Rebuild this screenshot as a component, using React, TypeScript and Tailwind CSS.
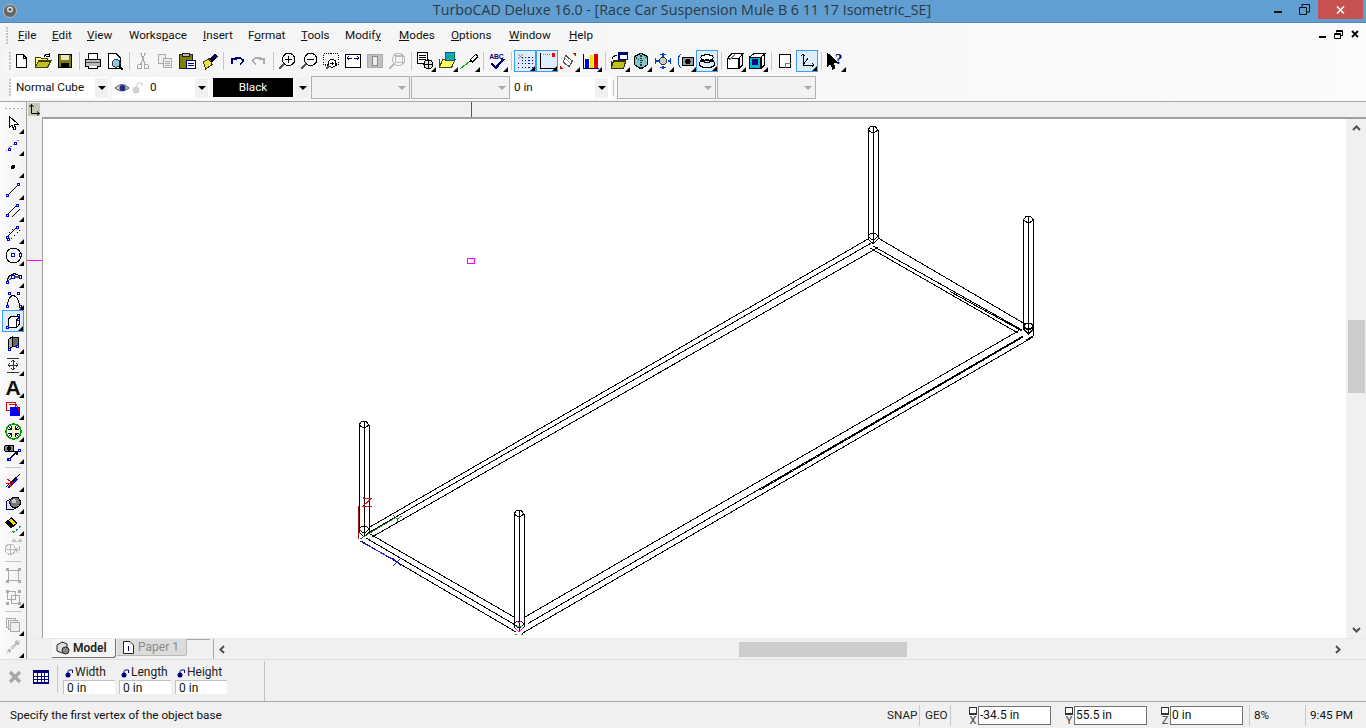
import React from "react";

type IP = { children: React.ReactNode; s?: number };
const I = ({ children, s = 16 }: IP) => (
  <svg width={s} height={s} viewBox="0 0 16 16" fill="none" stroke="#000" strokeWidth="1" shapeRendering="crispEdges">{children}</svg>
);
const Tri = () => (
  <svg width="5" height="5" viewBox="0 0 5 5" className="absolute right-0 bottom-0"><path d="M5 0V5H0Z" fill="#000" /></svg>
);

const Btn = ({ children, fly, on }: { children: React.ReactNode; fly?: boolean; on?: boolean }) => (
  <div className={on ? "relative w-[22px] h-[22px] flex items-center justify-center border border-[#3e9cf2] bg-[#deedfb]" : "relative w-[22px] h-[22px] flex items-center justify-center"}>
    {children}
    {fly && <Tri />}
  </div>
);
const Sep = () => (
  <div className="w-[6px] h-[22px] flex justify-center"><div className="w-px h-[18px] mt-[2px] bg-[#c8c8c8]" /></div>
);
const HSep = () => (
  <div className="h-[6px] w-[22px] flex items-center justify-center"><div className="h-px w-[16px] bg-[#c8c8c8]" /></div>
);

const Mag = ({ children, c = "#000" }: { children?: React.ReactNode; c?: string }) => (
  <I s={18}><circle cx="9.5" cy="6.5" r="5.5" stroke={c} /><path d="M5.5 10.5L1 15" stroke={c === "#000" ? "#555" : c} strokeWidth="2" />{children}</I>
);

const blue = "#0000e0";
const Pt = ({ x, y }: { x: number; y: number }) => <rect x={Math.floor(x) + 0.5} y={Math.floor(y) + 0.5} width="2" height="2" fill="#fff" stroke={blue} />;

const top: (React.ReactNode | null)[] = [
  <Btn key="1"><I><path d="M3.5 1.5H10L13.5 5V14.5H3.5Z" fill="#fff" /><path d="M10 1.5V5H13.5" /></I></Btn>,
  <Btn key="2"><I s={18}><path d="M1 14V5H6L7 6H12V8" fill="#ffff80" stroke="#404000" /><path d="M1 14L4 8H15L12 14Z" fill="#c0c020" stroke="#404000" /><path d="M9 4Q11 1 14 3M14 1V4H11" stroke="#000" /></I></Btn>,
  <Btn key="3"><I><rect x="1.5" y="1.5" width="13" height="13" fill="#808000" /><rect x="4" y="2" width="8" height="5" fill="#e8e8c0" stroke="none" /><rect x="4" y="10" width="8" height="4" fill="#000" stroke="none" /></I></Btn>,
  null,
  <Btn key="4"><I s={18}><path d="M4 6V1.5H12V6" fill="#fff" /><path d="M1.5 6.5H14.5V12.5H1.5Z" fill="#bbb" /><path d="M4 12V15H12V12" fill="#fff" /><path d="M2 9H14" stroke="#555" /></I></Btn>,
  <Btn key="5"><I s={18}><path d="M2.5 1.5H9L12.5 5V14.5H2.5Z" fill="#fff" /><circle cx="9" cy="10" r="3.5" fill="#8fc8e8" stroke="#333" /><path d="M11.5 12.5L15 15.5" strokeWidth="2" /></I></Btn>,
  null,
  <Btn key="6"><I s={18}><circle cx="5" cy="13" r="2" stroke="#aaa" /><circle cx="11" cy="13" r="2" stroke="#aaa" /><path d="M6 11L10 1M10 11L6 1" stroke="#aaa" /></I></Btn>,
  <Btn key="7"><I><path d="M1.5 1.5H8V10H1.5Z" fill="#eee" stroke="#aaa" /><path d="M6.5 5.5H14.5V14.5H6.5Z" fill="#eee" stroke="#aaa" /><path d="M8 8H13M8 10H13M8 12H13" stroke="#aaa" /></I></Btn>,
  <Btn key="8"><I s={18}><rect x="1.5" y="2.5" width="11" height="12" fill="#808000" stroke="#222" /><rect x="4" y="1" width="6" height="3" fill="#bbb" stroke="#222" /><rect x="7.5" y="7.5" width="8" height="7" fill="#fff" stroke="#000080" /><path d="M9 10H14M9 12H14" stroke="#000080" /></I></Btn>,
  <Btn key="9"><I s={18}><path d="M8 8L13 2L15 4L9 10" fill="#000080" stroke="#000" /><path d="M3 9L8 6L11 11L5 15Z" fill="#f0e040" stroke="#333" /><path d="M1 16H6" stroke="#f0e040" strokeDasharray="1 1" /></I></Btn>,
  null,
  <Btn key="10"><I><path d="M3 11V6H8" stroke="#000080" strokeWidth="1.5" /><path d="M4 6Q10 3 14 7Q14 10 11 11" stroke="#000080" strokeWidth="1.5" /></I></Btn>,
  <Btn key="11"><I><path d="M13 11V6H8" stroke="#aaa" strokeWidth="1.5" /><path d="M12 6Q6 3 2 7Q2 10 5 11" stroke="#aaa" strokeWidth="1.5" /></I></Btn>,
  null,
  <Btn key="12"><Mag><path d="M6.5 6.5H12.5M9.5 3.5V9.5" /></Mag></Btn>,
  <Btn key="13"><Mag><path d="M6.5 6.5H12.5" /></Mag></Btn>,
  <Btn key="14"><I s={18}><rect x="1.5" y="1.5" width="13" height="10" strokeDasharray="1 1" /><circle cx="9" cy="10" r="3.5" fill="#fff" /><path d="M6.5 12.5L4 15" strokeWidth="2" stroke="#555" /><path d="M7.5 10H10.5M9 8.5V11.5" /></I></Btn>,
  <Btn key="15"><I><rect x="0.5" y="1.5" width="15" height="13" rx="1" fill="#fff" /><path d="M2 5H7M14 5H9" stroke="#000080" /><path d="M4 3L2 5L4 7M12 3L14 5L12 7" stroke="#000080" /></I></Btn>,
  <Btn key="16"><I><rect x="0.5" y="1.5" width="15" height="13" fill="#c0c0c0" stroke="#aaa" /><rect x="5.5" y="3.5" width="5" height="9" fill="#eee" stroke="#888" /></I></Btn>,
  <Btn key="17"><I s={18}><circle cx="9.5" cy="6.5" r="5.5" stroke="#bbb" /><rect x="6.5" y="3.5" width="6" height="6" stroke="#bbb" /><path d="M5.5 10.5L1 15" stroke="#bbb" strokeWidth="2" /></I></Btn>,
  null,
  <Btn key="18" fly><I s={18}><rect x="1.5" y="0.5" width="9" height="10" fill="#fff" /><path d="M3 3H9M3 5H9M3 7H9" /><circle cx="11" cy="11" r="4" fill="#ddd" /><path d="M7 11H15M11 7V15" /></I></Btn>,
  <Btn key="19" fly><I s={18}><path d="M1 14L4 7H15L12 14Z" fill="#ffff60" stroke="#404000" /><path d="M1 14V6" stroke="#404000" /><rect x="7" y="0.5" width="8" height="7" fill="#20a0e0" stroke="#006060" /><path d="M8 6L11 3L14 6" stroke="#00c000" /></I></Btn>,
  <Btn key="20" fly><I s={18}><path d="M0 15L9 8" stroke="#00b000" /><path d="M9 7L14 2L16 4L11 9Z" fill="#fff" /><path d="M8 8L10 9" /></I></Btn>,
  null,
  <Btn key="21" fly><I s={18}><text x="1" y="6" fontSize="6" fontWeight="700" fontFamily="Liberation Sans" fill="#000080" stroke="none">ABC</text><path d="M3 10L7 14L14 6" stroke="#000080" strokeWidth="2.2" /></I></Btn>,
  null,
  <Btn key="22" fly on><I s={18}><g stroke="#0000c0" strokeDasharray="1 2"><path d="M5 7.5H15M2 10.5H15M2 13.5H15M5 4.5H15" /></g><path d="M2 2L6 6M6 2L2 6" stroke="#888" /></I></Btn>,
  <Btn key="23" fly on><I s={18}><path d="M2.5 1V14.5H15" /><path d="M4 2.5H12" stroke="#888" strokeDasharray="1 1" /><rect x="12" y="1" width="3" height="3" fill="#f00" stroke="none" /></I></Btn>,
  <Btn key="24" fly><I s={18}><path d="M5 3L11 8L8 13L3 9Z" fill="#fff" stroke="#555" /><path d="M4 5L9 10" stroke="#999" /><path d="M12 1L14 3M14 1L12 3M0 13L2 15M2 13L0 15" stroke="#e00000" /></I></Btn>,
  <Btn key="25" fly><I s={18}><path d="M1.5 15V1.5M1 14.5H15" stroke="#000060" /><rect x="3" y="6" width="3" height="8" fill="#0000e0" stroke="none" /><rect x="7" y="3" width="3" height="11" fill="#f0e000" stroke="none" /><rect x="11" y="2" width="3" height="12" fill="#e00000" stroke="none" /></I></Btn>,
  null,
  <Btn key="26" fly><I s={18}><path d="M1 15L3 8H14L12 15Z" fill="#c0c020" stroke="#303000" /><path d="M1 15V8" stroke="#303000" /><rect x="8" y="0.5" width="7.5" height="6" fill="#fff" stroke="#000080" /><rect x="8" y="0.5" width="7.5" height="2" fill="#000080" stroke="none" /><path d="M2 6Q3 3 6 3" /></I></Btn>,
  <Btn key="27" fly><I s={18}><path d="M8 1L14 4V11L8 15L2 11V4Z" fill="#80c8c8" /><path d="M8 1V15M2 4L8 8L14 4" stroke="#333" strokeDasharray="1 1" /></I></Btn>,
  <Btn key="28" fly><I s={18}><ellipse cx="8" cy="8" rx="3.5" ry="3" fill="#ccc" stroke="#333" /><path d="M8 1V4M8 12V15M1 8H4M12 8H15M5 2H11M5 14H11M1 5V11M15 5V11" stroke="#0040e0" /></I></Btn>,
  <Btn key="29" fly><I s={18}><path d="M4 2Q0 8 4 14" stroke="#0040e0" /><path d="M4 2L2 5" stroke="#0040e0" /><rect x="5.5" y="5" width="10" height="7" rx="1" fill="#999" /><circle cx="10.5" cy="8.5" r="2" fill="#000" /></I></Btn>,
  <Btn key="30" on fly><I s={18}><ellipse cx="8" cy="5" rx="5.5" ry="2.5" fill="#fff" /><path d="M2 7.5Q8 11 14 7.5" /><ellipse cx="8" cy="10.5" rx="7" ry="3.5" /></I></Btn>,
  null,
  <Btn key="31" fly><I s={18}><path d="M1.5 5.5H11.5V15H1.5Z" fill="#fff" /><path d="M1.5 5.5L5 1.5H15L11.5 5.5" fill="#fff" /><path d="M11.5 15L15 11V1.5" /><path d="M3 7L8 2" stroke="#888" /></I></Btn>,
  <Btn key="32" fly><I s={18}><path d="M1.5 4.5H11.5V15H1.5Z" fill="#00c0d0" /><rect x="3.5" y="6.5" width="5" height="5" fill="#000080" stroke="none" /><path d="M1.5 4.5L5 1.5H15L11.5 4.5" fill="#fff" /><path d="M11.5 15L15 11V1.5" /></I></Btn>,
  null,
  <Btn key="33"><I><path d="M2.5 1.5H13.5V14.5H2.5Z" fill="#fff" /><path d="M8.5 14.5V10H13.5" stroke="#777" /></I></Btn>,
  <Btn key="34" on fly><I><path d="M4 1V12H15" /><path d="M4 1L2 3M4 1L6 3M15 12L13 10M15 12L13 14M4 12L9 5" /></I></Btn>,
  null,
  <Btn key="35" fly><I s={18}><path d="M1 1V13L4 10L6 15L8 14L6 9H10Z" fill="#000" /><text x="8" y="11" fontSize="13" fontWeight="700" fontFamily="Liberation Serif" fill="#000060" stroke="none">?</text></I></Btn>,
];

const left: (React.ReactNode | null)[] = [
  <I key="a"><path d="M4 1V13L7 10L9 15L11 14L9 9H13Z" fill="#fff" /></I>,
  <I key="b"><path d="M1 14L15 2" stroke="#888" strokeDasharray="2 1" /><Pt x={3} y={11} /><Pt x={9} y={5} /></I>,
  <I key="c"><circle cx="8" cy="8" r="1.5" fill="#000" /></I>,
  <I key="d"><path d="M3 14L13 4" /><Pt x={1} y={13} /><Pt x={12} y={2} /></I>,
  <I key="e"><path d="M3 11L11 3M7 14L15 6" /><Pt x={1} y={11} /><Pt x={11} y={1} /></I>,
  <I key="f"><path d="M3 11L11 3" /><path d="M6 14L15 5" strokeDasharray="2 2" /><path d="M4 8L8 4" strokeDasharray="2 2" /><Pt x={1} y={11} /><Pt x={11} y={1} /><Pt x={2} y={13} /></I>,
  <I key="g" s={17}><circle cx="8" cy="8" r="7" /><Pt x={6.5} y={6.5} /><Pt x={13} y={6.5} /></I>,
  <I key="h" s={17}><path d="M2.5 11A6.5 6.5 0 0 1 14 7" /><path d="M3 11L7.5 7.5H14" stroke="#555" /><Pt x={1} y={11} /><Pt x={6} y={6} /><Pt x={13} y={6} /></I>,
  <I key="i" s={17}><path d="M2 14C4 1 11 1 14 14" /><Pt x={1} y={13} /><Pt x={3} y={1} /><Pt x={11} y={1} /><Pt x={13} y={13} /></I>,
  <I key="j"><path d="M3 6.5H11.5V14.5H3Z" fill="#fff" /><path d="M3 6.5L6.5 3H14.5L11.5 6.5M14.5 3V11L11.5 14.5" fill="#fff" /><Pt x={1} y={13} /><Pt x={12} y={1} /><Pt x={12} y={5} /></I>,
  <I key="k"><path d="M3 5L7 2V12L3 15Z" fill="#aaa" /><path d="M7 2H13V11L7 12Z" fill="#666" /><Pt x={3} y={13} /><Pt x={11} y={10} /></I>,
  <I key="l"><path d="M2 1H14M2 15H14M8 3V13M3 8H13M8 3L6 5M8 3L10 5M8 13L6 11M8 13L10 11M3 8L5 6M3 8L5 10M13 8L11 6M13 8L11 10" stroke="#333" /></I>,
  <span key="m" className="font-['Liberation_Sans',sans-serif] text-[21px] font-bold leading-none text-[#111]">A</span>,
  <I key="n"><rect x="1" y="1" width="9" height="8" fill="#fff" stroke="#e00000" /><rect x="5" y="6" width="10" height="9" fill="#0000f0" stroke="none" /><path d="M4 3H9Q14 4 13 10" stroke="#e00000" /></I>,
  <I key="o" s={17}><circle cx="8" cy="8" r="7" fill="#f8f8c0" stroke="#00a000" strokeWidth="1.5" /><path d="M3 3L6 6M13 3L10 6M3 13L6 10M13 13L10 10M6 3V6H3M10 3V6H13M6 13V10H3M10 13V10H13" stroke="#000060" /></I>,
  <I key="p" s={18}><rect x="0.5" y="1.5" width="8" height="5" rx="1" fill="#888" /><circle cx="4.5" cy="4" r="1.5" fill="#000" /><path d="M5 13L11 7" /><path d="M9 7H11.5V9.5" /><Pt x={3} y={12} /><Pt x={12} y={4} /></I>,
  null,
  <I key="q"><path d="M1 14L15 1" /><path d="M3 15L12 6" stroke="#0000f0" strokeWidth="1.5" /><path d="M2 6L9 11M6 14L5 10H1" stroke="#e00000" /></I>,
  <I key="r" s={17}><path d="M1 6L9 2H13V11L7 14H1Z" fill="#e8e8e8" stroke="#000060" /><circle cx="9.5" cy="7" r="5" fill="#777" /><circle cx="8.5" cy="6" r="2" fill="#ccc" stroke="none" /></I>,
  <I key="s" s={17}><path d="M1 5L6 1L11 6L6 10Z" fill="#f0e000" /><path d="M1 5L3 3L8 8L6 10Z" fill="#000" /><path d="M10 12H12M11 11V13" stroke="#0080a0" /><path d="M13 9H15M14 8V10" stroke="#0080a0" /><path d="M7 14H9M8 13V15" stroke="#00a000" /></I>,
  <I key="t" s={18}><circle cx="5.5" cy="10" r="4.5" stroke="#bbb" /><path d="M1 10H10M5.5 5.5V14.5" stroke="#bbb" /><path d="M7 3Q9 0 11 3H7M12 3Q14 0 16 3H12" stroke="#bbb" fill="#ddd" /><path d="M14 7V11H11M12 9L10 11L12 13" stroke="#bbb" /></I>,
  null,
  <I key="u" s={17}><rect x="3.5" y="3.5" width="9" height="9" stroke="#aaa" /><g fill="#aaa" stroke="none"><rect x="1" y="1" width="3" height="3" /><rect x="12" y="1" width="3" height="3" /><rect x="1" y="12" width="3" height="3" /><rect x="12" y="12" width="3" height="3" /></g></I>,
  <I key="v" s={17}><rect x="2.5" y="2.5" width="7" height="7" stroke="#aaa" /><rect x="6.5" y="6.5" width="7" height="7" stroke="#aaa" /><g fill="#aaa" stroke="none"><rect x="1" y="1" width="3" height="3" /><rect x="12" y="1" width="3" height="3" /><rect x="1" y="12" width="3" height="3" /><rect x="12" y="12" width="3" height="3" /></g></I>,
  null,
  <I key="w"><rect x="1.5" y="1.5" width="9" height="9" stroke="#aaa" /><rect x="3.5" y="3.5" width="9" height="9" stroke="#aaa" fill="#eee" /><rect x="5.5" y="5.5" width="9" height="9" stroke="#aaa" fill="#eee" /></I>,
  <I key="x"><path d="M1 15L15 1" stroke="#bbb" /><path d="M11 1L15 5L9 7ZM1 11L5 15L7 9Z" fill="#bbb" stroke="none" /><circle cx="8" cy="8" r="2" fill="#ccc" stroke="none" /></I>,
];
const leftFly = new Set(["a","b","c","d","e","f","g","h","i","j","k","l","m","n","o","p","q","r","s","v","w","x"]);

const menu: [string, string, string, string][] = [
  ["", "F", "ile", "w-[34px]"],
  ["", "E", "dit", "w-[35px]"],
  ["", "V", "iew", "w-[42px]"],
  ["Works", "p", "ace", "w-[74px]"],
  ["", "I", "nsert", "w-[45px]"],
  ["F", "o", "rmat", "w-[53px]"],
  ["", "T", "ools", "w-[44px]"],
  ["Modif", "y", "", "w-[54px]"],
  ["", "M", "odes", "w-[52px]"],
  ["", "O", "ptions", "w-[58px]"],
  ["", "W", "indow", "w-[60px]"],
  ["", "H", "elp", "w-[40px]"],
];

const Drop = ({ off }: { off?: boolean }) => (
  <div className={off ? "w-[13px] h-[20px] flex items-center justify-center" : "w-[13px] h-[20px] flex items-center justify-center bg-[#f0f0f0]"}>
    <svg width="8" height="4" viewBox="0 0 8 4"><path d="M0 0H8L4 4Z" fill={off ? "#a8a8a8" : "#000"} /></svg>
  </div>
);
const Off = () => (
  <div className="w-[99px] mr-[1px] h-[23px] border border-[#b0b0b0] flex items-center justify-end pr-[1px] bg-[#f2f2f2]"><Drop off /></div>
);
const Grip = () => (
  <div className="w-[3px] h-[18px] ml-[6px] flex flex-col justify-between">
    {[0,1,2,3,4,5].map((i) => <div key={i} className="w-[2px] h-[2px] bg-[#c4c4c4]" />)}
  </div>
);
const Lk = () => (
  <svg width="9" height="9" viewBox="0 0 9 9" className="shrink-0 mt-[3px]"><circle cx="3" cy="6" r="2.5" fill="#000080" /><path d="M3 4V2.5Q3 1 5 1H7.5V4" stroke="#000080" fill="none" /></svg>
);
const Prop = ({ label }: { label: string }) => (
  <div className="w-[52px] mr-[4px] -mt-[3px]">
    <div className="flex items-center h-[16px] leading-none text-[#222] pl-[2px] gap-[1px] text-[12px]"><Lk />{label}</div>
    <div className="h-[14px] bg-white border-t border-l border-[#c0c0c0] leading-[14px] pl-[3px] text-[12px]">0 in</div>
  </div>
);
const Coord = ({ a, v, cls }: { a: string; v: string; cls: string }) => (
  <div className={`flex items-end ${cls}`}>
    <div className="w-[10px] flex flex-col items-center text-[11px] leading-[9px] text-[#444]">
      <div className="w-[8px] h-[8px] border border-[#333] border-b-2 bg-white mb-[1px]" />
      {a}
    </div>
    <div className="w-[73px] h-[19px] bg-white border border-[#707070] leading-[17px] pl-[1px] text-[12px]">{v}</div>
  </div>
);

const drawing = (
  <svg width="1303" height="519" viewBox="43 118 1303 519" fill="none" stroke="#000" strokeWidth="1" className="block" shapeRendering="crispEdges">
    <rect x="467.5" y="257.5" width="7" height="5" stroke="#ff00ff" />
    {[[364, 420, 536], [519, 509, 631], [873, 125, 243], [1028.5, 215, 333]].map(([x, t, b]) => (
      <g key={x}>
        <path d={`M${x - 5} ${t + 4}V${b - 5}L${x} ${b}L${x + 5} ${b - 5}V${t + 4}M${x} ${t + 6}V${b}`} />
        <path d={`M${x - 5} ${t + 4}L${x - 2} ${t}H${x + 2}L${x + 5} ${t + 4}L${x + 2} ${t + 6}H${x - 2}ZM${x} ${t}V${t + 6}`} />
        <path d={`M${x - 5} ${b - 8}L${x - 2} ${b - 11}H${x + 2}L${x + 5} ${b - 8}L${x + 2} ${b - 5}H${x - 2}Z`} />
      </g>
    ))}
    <path d="M369 526.5L868 238M368 532L873 241M372 536L878 246.5" />
    <path d="M370 533L514 616M366 537L517 625M361 540L516 631" />
    <path d="M525 616L1019 329.5M528 622.5L1023 335M522 632.5L1033 336" />
    <path d="M760 489L1023 336" />
    <path d="M878 237L1025 323M873 245L1022 329M870 247L1018 332" />
    <path d="M950 290.5L1022 330" />
    <path d="M1023 327H1033V335L1026 339" />
    <path d="M358.5 505V538" stroke="#a01010" />
    <path d="M363 497H372L363 505H372M363 497V496M363 505.5H372" stroke="#c02020" />
    <path d="M360 538L395 517M393 514L397 518L402 515M397 518L397 521" stroke="#208020" />
    <path d="M360 540L396 560M393 565L401 557M393 557L401 565" stroke="#2020c0" />
    <path d="M517 620L519 622L521 620M515 627L519 631L523 627" stroke="#ff00ff" />
    <path d="M516 625H522M515 633H517M521 633H523" stroke="#20a020" />
  </svg>
);

export default function App() {
  return (
    <div className="w-[1366px] h-[728px] overflow-hidden flex flex-col bg-[#f0f0f0] text-[#111] font-['Roboto',sans-serif] text-[11.7px]">
      {/* Title bar */}
      <div className="h-[23px] shrink-0 bg-[#619ed1] border-b border-[#4f88b8] relative flex items-center justify-center">
        <svg width="16" height="16" viewBox="0 0 16 16" className="absolute left-[2px] top-[3px]"><circle cx="8" cy="8" r="6.5" fill="#666" stroke="#bbb" /><circle cx="8" cy="6.5" r="3" fill="#ddd" /><circle cx="8" cy="6.5" r="1.5" fill="#555" /></svg>
        <span className="text-[14.25px] leading-none text-[#2b3a46] font-['Open_Sans',sans-serif] mb-[1px] mr-[2px]">TurboCAD Deluxe 16.0 - [Race Car Suspension Mule B 6 11 17 Isometric_SE]</span>
        <div className="absolute left-[1274px] top-[11px] w-[8px] h-[2px] bg-[#111]" />
        <svg width="11" height="11" viewBox="0 0 11 11" className="absolute left-[1299px] top-[4px]"><path d="M0.5 3.5H7.5V10.5H0.5ZM3 3V0.5H10.5V8H8" fill="none" stroke="#111" /></svg>
        <div className="absolute left-[1318px] top-0 w-[45px] h-[19px] bg-[#c75050] flex items-center justify-center">
          <svg width="9" height="8" viewBox="0 0 9 8"><path d="M1 0.5L8 7.5M8 0.5L1 7.5" stroke="#fff" strokeWidth="1.6" /></svg>
        </div>
      </div>
      {/* Chrome */}
      <div className="bg-gradient-to-r from-[#f4f4f4] to-[#fbfbfb] shrink-0">
        <div className="h-[25px] flex items-center relative">
          <Grip />
          <div className="flex ml-[9px]">
            {menu.map(([a, b, c, w]) => (
              <div key={a + b + c} className={`${w} whitespace-nowrap`}>{a}<span className="underline">{b}</span>{c}</div>
            ))}
          </div>
          <div className="absolute left-[1319px] top-[13px] w-[7px] h-[2px] bg-black" />
          <svg width="9" height="9" viewBox="0 0 9 9" className="absolute left-[1334px] top-[7px]"><path d="M0.5 3.5H6.5V8.5H0.5ZM0.5 4.5H6.5M2.5 2.5V0.5H8.5V5.5H7M2.5 1.5H8.5" fill="none" stroke="#000" /></svg>
          <svg width="8" height="8" viewBox="0 0 8 8" className="absolute left-[1351px] top-[7px]"><path d="M1 1L7 7M7 1L1 7" stroke="#000" strokeWidth="1.8" /></svg>
        </div>
        <div className="h-[26px] flex items-center">
          <div className="h-[24px] flex items-center bg-[#f6f6f6] w-[845px] ml-[3px]">
            <Grip />
            <div className="flex items-center -ml-[2px]">
              {top.map((n, i) => (n === null ? <Sep key={i} /> : n))}
            </div>
          </div>
        </div>
        <div className="h-[27px] flex items-center pl-[3px]">
          <Grip />
          <div className="w-[98px] h-[22px] ml-[-1px] bg-white flex items-center justify-between pr-[1px] pl-[5px]">Normal Cube<Drop /></div>
          <div className="w-[97px] h-[22px] ml-[3px] bg-white flex items-center pr-[1px] pl-[3px]">
            <svg width="14" height="10" viewBox="0 0 14 10" className="shrink-0"><path d="M0 5Q7 -2 14 5Q7 11 0 5Z" fill="#ccc" stroke="#555" /><circle cx="7.5" cy="5" r="3" fill="#203080" /></svg>
            <svg width="11" height="12" viewBox="0 0 11 12" className="shrink-0 ml-[3px]"><circle cx="4" cy="8" r="3.5" fill="#d0d0d0" /><path d="M5 5V2Q5 1 7 1H10V4" stroke="#ccc" fill="none" /></svg>
            <span className="ml-[7px] flex-1">0</span>
            <Drop />
          </div>
          <div className="w-[80px] h-[19px] ml-[4px] bg-black text-white text-center leading-[19px]">Black</div>
          <div className="ml-[3px]"><Drop /></div>
          <div className="ml-[2px]"><Off /></div>
          <Off />
          <div className="w-[100px] h-[22px] bg-white flex items-center justify-between pl-[3px] pr-[3px]">0 in<Drop /></div>
          <div className="w-px h-[16px] bg-[#c8c8c8] ml-[2px] mr-[3px]" />
          <Off />
          <Off />
        </div>
      </div>
      {/* Middle */}
      <div className="flex-1 min-h-0 flex border-t border-[#a8a8a8]">
        <div className="w-[27px] shrink-0 border-r border-[#a0a0a0] flex flex-col pl-[2px] bg-gradient-to-r from-[#fbfbfb] to-[#f2f2f2]">
          <div className="h-[10px] flex items-start pt-[6px] gap-[2px] pl-[3px]">
            {[0,1,2,3,4].map((i) => <div key={i} className="w-[2px] h-[1px] bg-[#b0b0b0]" />)}
          </div>
          {left.map((n, i) => {
            if (n === null) return <HSep key={i} />;
            const key = (n as React.ReactElement).key as string;
            return <Btn key={i} fly={leftFly.has(key)} on={key === "j"}>{n}</Btn>;
          })}
        </div>
        <div className="flex-1 min-w-0 flex flex-col">
          <div className="h-[15px] shrink-0 relative bg-[#f0f0f0]">
            <div className="absolute left-[1px] top-[1px] w-[12px] h-[13px] bg-[#c8c8b8] flex items-center justify-center">
              <svg width="11" height="12" viewBox="0 0 11 12"><path d="M2.5 0.5V9.5H10.5M2.5 0.5L0.5 3M2.5 0.5L4.5 3M10.5 9.5L8 7.5M10.5 9.5L8 11.5" fill="none" stroke="#000" /></svg>
            </div>
            <div className="absolute left-[444px] top-0 w-px h-[15px] bg-[#d000d0]" />
          </div>
          <div className="flex-1 min-h-0 flex">
            <div className="w-[15px] shrink-0 relative">
              <div className="absolute left-0 top-[143px] w-[15px] h-px bg-[#ff00ff]" />
            </div>
            <div className="flex-1 min-w-0 border-l border-t-2 border-[#a0a0a0] bg-white flex">
              <div className="flex-1 min-w-0 overflow-hidden">{drawing}</div>
            </div>
            <div className="w-[20px] shrink-0 bg-[#f0f0f0] flex flex-col items-center border-t-2 border-[#a0a0a0]">
              <div className="h-[17px] w-[17px] flex items-center justify-center bg-[#f0f0f0]">
                <svg width="9" height="6" viewBox="0 0 9 6"><path d="M1 5L4.5 1.5L8 5" fill="none" stroke="#505050" strokeWidth="2" /></svg>
              </div>
              <div className="h-[184px]" />
              <div className="w-[17px] h-[73px] bg-[#cdcdcd]" />
              <div className="flex-1" />
              <div className="h-[17px] w-[17px] flex items-center justify-center">
                <svg width="9" height="6" viewBox="0 0 9 6"><path d="M1 1L4.5 4.5L8 1" fill="none" stroke="#505050" strokeWidth="2" /></svg>
              </div>
            </div>
          </div>
          {/* tabs + h scroll */}
          <div className="h-[21px] shrink-0 flex border-t border-[#e8e8e8] bg-[#f0f0f0]">
            <div className="w-[186px] shrink-0 flex pl-[25px] items-start">
              <div className="h-[19px] w-[64px] bg-[#f6f6f6] border-b border-r border-[#707070] rounded-br-[3px] flex items-center pl-[4px] gap-[3px] font-semibold text-[12px] text-[#222]">
                <svg width="14" height="14" viewBox="0 0 14 14" className="shrink-0"><path d="M1 4L6 1L11 3L11 9L6 12L1 10Z" fill="#ddd" stroke="#222" /><circle cx="9.5" cy="9.5" r="3.5" fill="#888" stroke="#222" /></svg>
                Model
              </div>
              <div className="h-[17px] w-[70px] ml-px bg-[#dcdcdc] border-r border-b border-[#b8b8b8] rounded-br-[3px] flex items-center pl-[6px] gap-[4px] text-[12px] text-[#8c8c8c]">
                <svg width="11" height="13" viewBox="0 0 11 13" className="shrink-0"><path d="M0.5 0.5H7L10.5 4V12.5H0.5Z" fill="#fff" stroke="#222" /><path d="M5.5 5V10" stroke="#000080" /></svg>
                Paper 1
              </div>
              <div className="w-[23px] h-px bg-[#a8a8a8]" />
            </div>
            <div className="flex-1 min-w-0 flex items-center border-l border-[#a8a8a8] pl-[5px] relative">
              <svg width="6" height="9" viewBox="0 0 6 9"><path d="M5 1L1.5 4.5L5 8" fill="none" stroke="#505050" strokeWidth="2" /></svg>
              <div className="ml-[514px] w-[168px] h-[15px] bg-[#cdcdcd]" />
              <svg width="6" height="9" viewBox="0 0 6 9" className="ml-[428px]"><path d="M1 1L4.5 4.5L1 8" fill="none" stroke="#505050" strokeWidth="2" /></svg>
            </div>
          </div>
        </div>
      </div>
      {/* Properties */}
      <div className="h-[42px] shrink-0 flex items-center border-t border-[#e0e0e0]">
        <svg width="14" height="14" viewBox="0 0 14 14" className="ml-[8px] -mt-[7px]"><path d="M2 2L12 12M12 2L2 12" stroke="#a8a8a8" strokeWidth="3.4" /></svg>
        <svg width="16" height="14" viewBox="0 0 16 14" className="ml-[11px] -mt-[7px]" shapeRendering="crispEdges"><rect x="0.5" y="0.5" width="15" height="13" fill="#fff" stroke="#000080" /><rect x="0" y="0" width="16" height="3" fill="#000080" /><path d="M1 6H15M1 9H15M1 12H15M4.5 3V13M8 3V13M11.5 3V13" stroke="#000080" /></svg>
        <div className="w-px h-[28px] bg-[#c8c8c8] ml-[8px] mr-[5px] -mt-[3px]" />
        <Prop label="Width" />
        <Prop label="Length" />
        <Prop label="Height" />
        <div className="w-px h-[40px] bg-[#c0c0c0] ml-[33px]" />
      </div>
      {/* Status */}
      <div className="h-[27px] shrink-0 border-t border-[#a8a8a8] flex items-center bg-[#f0f0f0]">
        <div className="w-[887px] pl-[10px] whitespace-nowrap mt-[2px]">Specify the first vertex of the object base</div>
        <div className="w-[32px] text-[#222] mt-[2px]">SNAP</div>
        <div className="w-px h-[21px] bg-[#c8c8c8]" />
        <div className="w-[30px] pl-[5px] text-[#222] mt-[2px]">GEO</div>
        <div className="w-px h-[21px] bg-[#c8c8c8]" />
        <Coord a="X" v="-34.5 in" cls="ml-[17px]" />
        <Coord a="Y" v="55.5 in" cls="ml-[13px]" />
        <Coord a="Z" v="0 in" cls="ml-[13px]" />
        <div className="w-px h-[21px] bg-[#c8c8c8] ml-[6px]" />
        <div className="w-[55px] pl-[4px] mt-[2px]">8%</div>
        <div className="w-px h-[21px] bg-[#c8c8c8]" />
        <div className="pl-[4px] whitespace-nowrap mt-[2px]">9:45 PM</div>
      </div>
    </div>
  );
}
